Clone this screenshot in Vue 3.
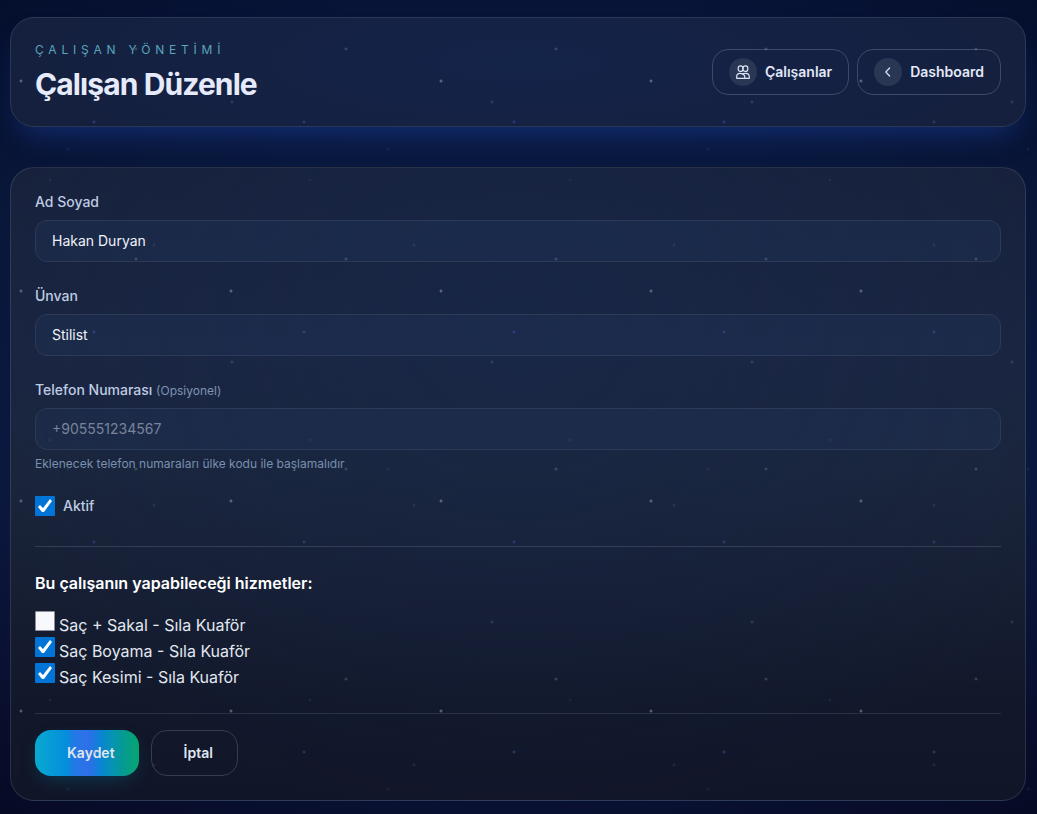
<script setup>
import { reactive } from 'vue'

const form = reactive({
  name: 'Hakan Duryan',
  title: 'Stilist',
  phone: '',
  active: true,
})

const services = reactive([
  { id: 1, label: 'Saç + Sakal - Sıla Kuaför', checked: false },
  { id: 2, label: 'Saç Boyama - Sıla Kuaför', checked: true },
  { id: 3, label: 'Saç Kesimi - Sıla Kuaför', checked: true },
])
</script>

<template>
  <div class="page">
    <header class="hero">
      <div class="heading">
        <p class="eyebrow">ÇALIŞAN YÖNETİMİ</p>
        <h1>Çalışan Düzenle</h1>
      </div>
      <nav class="nav">
        <a class="btn" href="#employees">
          <span class="icon">
            <svg viewBox="0 0 14 14" width="14" height="14" aria-hidden="true">
              <rect x="2.2" y="0.8" width="4.8" height="5.6" rx="2.2" />
              <rect x="7" y="0.8" width="4.8" height="5.6" rx="2.2" />
              <path d="M0.7 13.3v-1.6c0-2 1.4-3.4 3.3-3.4s4.8 1.4 4.8 3.4v1.6z" />
              <path d="M6.6 8.8c.8-.4 1.8-.5 3.1-.5 2.1 0 3.6 1.4 3.6 3.4v1.6H8.8" />
            </svg>
          </span>
          Çalışanlar
        </a>
        <a class="btn" href="#dashboard">
          <span class="icon">
            <svg viewBox="0 0 14 14" width="14" height="14" aria-hidden="true">
              <path d="M8.6 3L4.8 7L8.6 11" />
            </svg>
          </span>
          Dashboard
        </a>
      </nav>
    </header>

    <form class="panel" @submit.prevent>
      <div class="field">
        <label for="name">Ad Soyad</label>
        <input id="name" v-model="form.name" class="text" type="text" />
      </div>
      <div class="field">
        <label for="title">Ünvan</label>
        <input id="title" v-model="form.title" class="text" type="text" />
      </div>
      <div class="field">
        <label for="phone">Telefon Numarası <span class="optional">(Opsiyonel)</span></label>
        <input id="phone" v-model="form.phone" class="text" type="tel" placeholder="+905551234567" />
        <p class="help">Eklenecek telefon numaraları ülke kodu ile başlamalıdır</p>
      </div>
      <div class="active">
        <input id="active" v-model="form.active" class="check" type="checkbox" />
        <label for="active">Aktif</label>
      </div>

      <section class="services">
        <h2>Bu çalışanın yapabileceği hizmetler:</h2>
        <div v-for="s in services" :key="s.id" class="service">
          <input :id="'service-' + s.id" v-model="s.checked" class="check" type="checkbox" />
          <label :for="'service-' + s.id">{{ s.label }}</label>
        </div>
      </section>

      <div class="actions">
        <button class="action save" type="submit">Kaydet</button>
        <a class="action cancel" href="#cancel">İptal</a>
      </div>
    </form>

    <div class="stars" aria-hidden="true"></div>
  </div>
</template>

<style>
body {
  margin: 0;
  background: #050a24;
}
</style>

<style scoped>
.page {
  position: relative;
  box-sizing: border-box;
  min-height: 100vh;
  padding: 17px 11px 13px 10px;
  font-family: Inter, "Liberation Sans", sans-serif;
  color: #e2e8f0;
  background:
    radial-gradient(ellipse 70% 90% at 50% 50%, rgba(14, 34, 84, 0.55), rgba(14, 34, 84, 0.3) 60%, transparent 100%),
    linear-gradient(180deg, #040d2a 0%, #081433 25%, #0a1538 60%, #080a26 90%, #060820 100%);
}

h1,
h2,
p {
  margin: 0;
}

.hero {
  display: flex;
  align-items: center;
  justify-content: space-between;
  padding: 24px;
  margin-bottom: 40px;
  border: 1px solid #2a3855;
  border-radius: 24px;
  background: radial-gradient(ellipse 65% 150% at 50% 40%, #142349, #151f3b 100%);
  box-shadow: 0 16px 28px -12px rgba(29, 72, 180, 0.52);
}

.eyebrow {
  margin-bottom: 8px;
  font-size: 12px;
  line-height: 16px;
  letter-spacing: 0.4em;
  color: #59a5bd;
}

h1 {
  font-size: 30px;
  line-height: 36px;
  font-weight: 700;
  letter-spacing: -0.03em;
  color: #e6ebfb;
}

.nav {
  display: flex;
  gap: 8px;
}

.btn {
  display: flex;
  align-items: center;
  gap: 8px;
  padding: 8px 16px;
  border: 1px solid #3d4966;
  border-radius: 16px;
  font-size: 14px;
  line-height: 20px;
  font-weight: 600;
  color: #e2e8f8;
  text-decoration: none;
}

.icon {
  display: flex;
  align-items: center;
  justify-content: center;
  width: 28px;
  height: 28px;
  border-radius: 50%;
  background: #293754;
}

.icon svg {
  fill: none;
  stroke: #dde5f5;
  stroke-width: 1.2;
  stroke-linecap: round;
  stroke-linejoin: round;
}

.panel {
  padding: 24px;
  border: 1px solid rgba(148, 170, 205, 0.18);
  border-radius: 24px;
  background:
    radial-gradient(ellipse 60% 80% at 50% 25%, rgba(22, 42, 82, 0.36), transparent),
    linear-gradient(180deg, #17213b 0%, #1a2540 30%, #1a253b 48%, #171f34 65%, #12182a 85%, #111528 100%);
}

.field {
  display: flex;
  flex-direction: column;
  margin-bottom: 24px;
}

.field label,
.active label {
  font-size: 14px;
  line-height: 20px;
  font-weight: 500;
  color: #bfcbe3;
}

.text {
  box-sizing: border-box;
  width: 100%;
  height: 42px;
  margin-top: 8px;
  padding: 0 16px 2px;
  border: 1px solid #2b3a56;
  border-radius: 12px;
  background: rgba(32, 54, 88, 0.36);
  font-family: inherit;
  font-size: 14px;
  color: #eef2f9;
}

.text::placeholder {
  color: #78849a;
  opacity: 1;
}

.field .optional {
  font-size: 12px;
  line-height: 16px;
  font-weight: 400;
  color: #7f93b3;
}

.help {
  margin-top: 6px;
  font-size: 12px;
  line-height: 16px;
  color: #7a8fae;
}

.active {
  display: flex;
  gap: 8px;
  margin-bottom: 30px;
}

.check {
  appearance: none;
  box-sizing: border-box;
  width: 20px;
  height: 20px;
  margin: 0;
  border: 1px solid #8a909c;
  border-radius: 1px;
  background: #f8f9fd;
}

.check:checked {
  border: 0;
  background: #0075d7;
}

.check:checked::before {
  content: "";
  display: block;
  width: 20px;
  height: 20px;
  background: #fff;
  clip-path: polygon(3px 11px, 5px 9px, 8px 12px, 15px 3px, 17px 5px, 9px 16px, 7px 16px);
}

.services {
  padding: 24px 0;
  border-top: 1px solid rgba(148, 163, 184, 0.22);
  border-bottom: 1px solid rgba(148, 163, 184, 0.18);
}

h2 {
  margin-bottom: 16px;
  font-size: 16px;
  line-height: 24px;
  font-weight: 600;
  color: #fff;
}

.service {
  font-size: 16px;
  line-height: 24px;
}

.service .check {
  margin-right: 4px;
}

.actions {
  display: flex;
  gap: 12px;
  padding-top: 16px;
}

.action {
  box-sizing: border-box;
  display: flex;
  align-items: center;
  height: 46px;
  padding: 0 24px 0 32px;
  border: 0;
  border-radius: 16px;
  font-family: inherit;
  font-size: 14px;
  line-height: 20px;
  font-weight: 600;
  color: #dfe6ee;
  text-decoration: none;
}

.save {
  background: linear-gradient(90deg, #08a9cf 0%, #058ddd 31%, #2577e8 38%, #2e70e8 52%, #0a83d4 63%, #0593b4 74%, #069b90 86%, #06a66f 100%);
  box-shadow: 0 8px 20px -6px rgba(10, 120, 150, 0.4);
}

.cancel {
  border: 1px solid #363d4f;
}

.stars {
  position: absolute;
  inset: 0;
  pointer-events: none;
  background-image:
    radial-gradient(circle at 21px 81px, rgba(255, 255, 255, 0.45), transparent 2px),
    radial-gradient(circle at 136px 49px, rgba(190, 205, 240, 0.32), transparent 2px),
    radial-gradient(circle at 94px 122px, rgba(90, 105, 210, 0.5), transparent 2px),
    radial-gradient(circle at 232px 102px, rgba(170, 190, 230, 0.26), transparent 2px),
    radial-gradient(circle at 154px 245px, rgba(170, 190, 230, 0.16), transparent 2px),
    radial-gradient(circle at 50px 180px, rgba(120, 150, 210, 0.14), transparent 2px),
    radial-gradient(circle at 68px 149px, rgba(150, 170, 210, 0.12), transparent 2px);
  background-size: 210px 210px, 210px 210px, 210px 210px, 260px 260px, 260px 260px, 260px 260px, 320px 320px;
}
</style>
